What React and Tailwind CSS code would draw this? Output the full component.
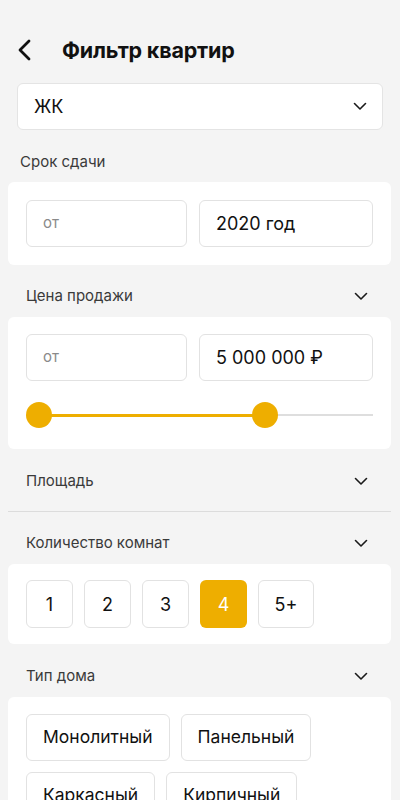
import React from 'react';

const font = { fontFamily: 'Inter, "Noto Sans", sans-serif' };

const Chevron = ({ className = '' }) => (
    <svg width="14" height="9" viewBox="0 0 14 9" fill="none" className={className}>
        <path d="M1.5 1.5L7 7L12.5 1.5" stroke="#1a1a1a" strokeWidth="1.6" strokeLinecap="round" strokeLinejoin="round" />
    </svg>
);

const SectionHeader = ({ title, chevron = true, pt = 'pt-[21px]', pb = 'pb-[11px]', pl = 'pl-[26px]' }) => (
    <div className={`flex items-center justify-between ${pl} pr-[32px] ${pt} ${pb}`}>
        <span className="text-[15px] leading-[20px] text-[#3a3a3a]">{title}</span>
        {chevron && <Chevron />}
    </div>
);

const Card = ({ children, className = '' }) => (
    <div className={`ml-[8px] mr-[9px] bg-white rounded-[6px] ${className}`}>{children}</div>
);

const Field = ({ value, placeholder, className = '' }) => (
    <div className={`h-[47px] border border-[#e2e2e2] rounded-[6px] flex items-center pl-[16px] ${className}`}>
        {value
            ? <span className="text-[18px] text-[#111]">{value}</span>
            : <span className="text-[15px] text-[#8a8a8a]">{placeholder}</span>}
    </div>
);

const App = () => {
    const rooms = ['1', '2', '3', '4', '5+'];
    const types = [['Монолитный', 'Панельный'], ['Каркасный', 'Кирпичный']];

    return (
        <div className="w-[400px] h-[800px] overflow-hidden bg-[#f4f4f4]" style={font}>
            <div className="pt-[30px] h-[70px] flex items-center pl-[17px]">
                <svg width="14" height="22" viewBox="0 0 14 22" fill="none">
                    <path d="M12 2L3 11L12 20" stroke="#111" strokeWidth="2.8" strokeLinecap="round" strokeLinejoin="round" />
                </svg>
                <h1 className="ml-[31px] text-[21.5px] font-bold text-[#111] tracking-[-0.2px]">Фильтр квартир</h1>
            </div>

            <div className="mt-[13px] mx-[17px] h-[47px] bg-white border border-[#e4e4e4] rounded-[6px] flex items-center justify-between pl-[16px] pr-[15px]">
                <span className="text-[18px] text-[#111]">ЖК</span>
                <Chevron />
            </div>

            <SectionHeader title="Срок сдачи" chevron={false} pt="pt-[22px]" pb="pb-[10px]" pl="pl-[20px]" />

            <Card className="px-[18px] py-[18px] flex gap-[12px]">
                <Field placeholder="от" className="w-[161px]" />
                <Field value="2020 год" className="flex-1" />
            </Card>

            <SectionHeader title="Цена продажи" />

            <Card className="px-[18px] pt-[17px] pb-[21px]">
                <div className="flex gap-[12px]">
                    <Field placeholder="от" className="w-[161px]" />
                    <Field value="5 000 000 ₽" className="flex-1" />
                </div>
                <div className="relative mt-[21px] h-[26px]">
                    <div className="absolute left-[12px] right-0 top-[12px] h-[2px] bg-[#dedede]" />
                    <div className="absolute left-[12px] w-[227px] top-[12px] h-[3px] bg-[#eeae00]" />
                    <div className="absolute left-0 top-0 w-[26px] h-[26px] rounded-full bg-[#eeae00]" />
                    <div className="absolute left-[226px] top-0 w-[26px] h-[26px] rounded-full bg-[#eeae00]" />
                </div>
            </Card>

            <SectionHeader title="Площадь" pt="pt-[22px]" pb="pb-[20px]" />
            <div className="ml-[8px] mr-[9px] h-[1px] bg-[#dcdcdc]" />
            <SectionHeader title="Количество комнат" pt="pt-[21px]" />

            <Card className="px-[18px] pt-[16px] pb-[16px] flex gap-[11px]">
                {rooms.map(r => (
                    <div
                        key={r}
                        className={`h-[48px] ${r === '5+' ? 'w-[56px]' : 'w-[47px]'} rounded-[6px] flex items-center justify-center text-[18px] ${r === '4' ? 'bg-[#eeae00] text-white' : 'border border-[#e2e2e2] text-[#111]'}`}
                    >
                        {r}
                    </div>
                ))}
            </Card>

            <SectionHeader title="Тип дома" pt="pt-[22px]" />

            <Card className="px-[18px] pt-[17px] pb-[16px] flex flex-col gap-[11px]">
                {types.map((row, i) => (
                    <div key={i} className="flex gap-[11px]">
                        {row.map(t => (
                            <div key={t} className="h-[47px] px-[16px] border border-[#e2e2e2] rounded-[6px] flex items-center text-[17.5px] text-[#111]">
                                {t}
                            </div>
                        ))}
                    </div>
                ))}
            </Card>
        </div>
    );
};

export default App;
